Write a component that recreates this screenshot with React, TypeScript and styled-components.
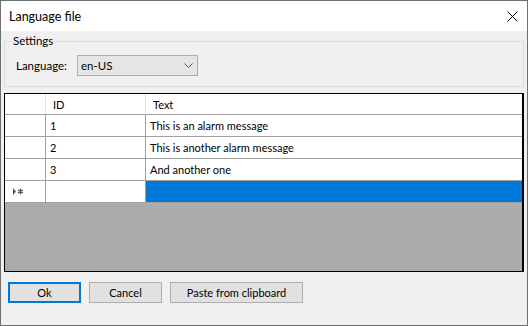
import React from "react";
import styled, { createGlobalStyle } from "styled-components";

const Global = createGlobalStyle`
  html, body { margin: 0; padding: 0; background: #f0f0f0; }
  * { box-sizing: border-box; }
  body { font-family: "Segoe UI", Lato, "Noto Sans", sans-serif; font-size: 12px; color: #000; }
`;

const Window = styled.div`
  width: 528px;
  height: 326px;
  border: 1px solid #6f6f6f;
  display: flex;
  flex-direction: column;
  background: #f0f0f0;
`;

const TitleBar = styled.div`
  height: 30px;
  background: #fff;
  display: flex;
  align-items: center;
  justify-content: space-between;
  padding: 0 0 0 8px;
  font-size: 12.5px;
`;

const CloseBtn = styled.div`
  width: 30px;
  height: 30px;
  display: flex;
  align-items: center;
  justify-content: center;
`;

const Client = styled.div`
  flex: 1;
  display: flex;
  flex-direction: column;
  padding: 2px 3px 0 3px;
  font-size: 11px;
`;

const GroupBox = styled.fieldset`
  margin: 0;
  border: 1px solid #dcdcdc;
  padding: 0 0 7px 7px;
  height: 54px;
  min-width: 0;
`;

const Legend = styled.legend`
  padding: 0 1px;
  line-height: 16px;
  font-size: 11.5px;
`;

const Row = styled.div`
  display: flex;
  align-items: center;
  gap: 10px;
  padding-left: 4px;
  margin-top: 6px;
`;

const Label = styled.span`
  font-size: 11.5px;
`;

const Combo = styled.div`
  width: 121px;
  height: 21px;
  background: #e5e5e5;
  border: 1px solid #adadad;
  display: flex;
  align-items: center;
  justify-content: space-between;
  padding: 0 4px 0 3px;
  font-size: 11.5px;
`;

const Grid = styled.div`
  margin-top: 6px;
  height: 179px;
  border: 1px solid #000;
  border-right-width: 2px;
  background: #ababab;
  display: flex;
  flex-direction: column;
`;

const GridRow = styled.div<{ $header?: boolean }>`
  display: grid;
  grid-template-columns: 41px 100px 1fr;
  height: ${(p) => (p.$header ? "21px" : "22px")};
  background: #fff;
  border-bottom: 1px solid #a0a0a0;
`;

const Cell = styled.div<{ $header?: boolean; $selected?: boolean }>`
  display: flex;
  align-items: center;
  padding-left: ${(p) => (p.$header ? "7px" : "4px")};
  border-right: 1px solid ${(p) => (p.$header ? "#e3e3e3" : "#a0a0a0")};
  background: ${(p) => (p.$selected ? "#0078d7" : "#fff")};
  white-space: nowrap;
  overflow: hidden;
  &:last-child { border-right: none; }
`;

const Buttons = styled.div`
  display: flex;
  gap: 8px;
  padding: 10px 0 0 4px;
`;

const Button = styled.div<{ $w: number; $default?: boolean }>`
  width: ${(p) => p.$w}px;
  height: 21px;
  background: #e1e1e1;
  border: ${(p) => (p.$default ? "2px solid #0078d7" : "1px solid #adadad")};
  display: flex;
  align-items: center;
  justify-content: center;
`;

const rows = [
  ["1", "This is an alarm message"],
  ["2", "This is another alarm message"],
  ["3", "And another one"],
];

export default function App() {
  return (
    <>
      <Global />
      <Window>
        <TitleBar>
          <span>Language file</span>
          <CloseBtn>
            <svg width="11" height="11" viewBox="0 0 11 11">
              <path d="M0.5 0.5L10.5 10.5M10.5 0.5L0.5 10.5" stroke="#000" strokeWidth="1" />
            </svg>
          </CloseBtn>
        </TitleBar>
        <Client>
          <GroupBox>
            <Legend>Settings</Legend>
            <Row>
              <Label>Language:</Label>
              <Combo>
                <span>en-US</span>
                <svg width="9" height="5" viewBox="0 0 9 5">
                  <path d="M0.5 0.5L4.5 4.5L8.5 0.5" stroke="#555" fill="none" strokeWidth="1" />
                </svg>
              </Combo>
            </Row>
          </GroupBox>
          <Grid>
            <GridRow $header>
              <Cell $header />
              <Cell $header>ID</Cell>
              <Cell $header>Text</Cell>
            </GridRow>
            {rows.map(([id, t]) => (
              <GridRow key={id}>
                <Cell />
                <Cell>{id}</Cell>
                <Cell>{t}</Cell>
              </GridRow>
            ))}
            <GridRow>
              <Cell>
                <svg width="12" height="7" viewBox="0 0 12 7" style={{ marginLeft: 4 }}>
                  <path d="M0 0L3 3.5L0 7Z" fill="#555" />
                  <path d="M7.5 0.5V6.5M5 2L10 5M10 2L5 5" stroke="#555" strokeWidth="1.2" />
                </svg>
              </Cell>
              <Cell />
              <Cell $selected />
            </GridRow>
          </Grid>
          <Buttons>
            <Button $w={73} $default>Ok</Button>
            <Button $w={73}>Cancel</Button>
            <Button $w={133}>Paste from clipboard</Button>
          </Buttons>
        </Client>
      </Window>
    </>
  );
}
